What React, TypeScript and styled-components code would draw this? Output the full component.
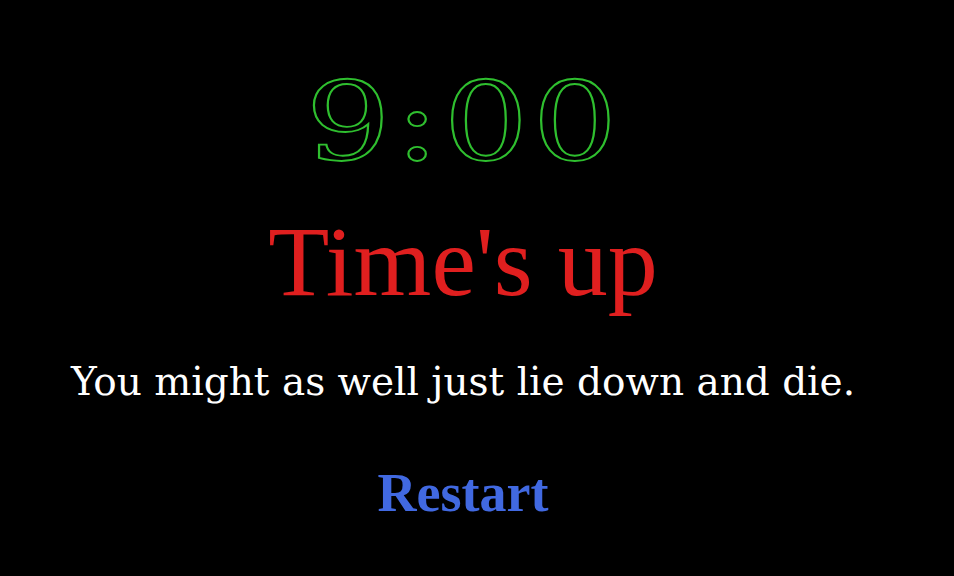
import styled, { createGlobalStyle } from 'styled-components';

const GlobalStyle = createGlobalStyle`
  html, body {
    margin: 0;
    padding: 0;
    background: #000;
  }
  body {
    width: 954px;
    height: 576px;
    overflow: hidden;
  }
`;

const Screen = styled.div`
  width: 954px;
  height: 576px;
  background: #000;
  display: flex;
  flex-direction: column;
  align-items: center;
  padding-right: 28px;
  box-sizing: border-box;
`;

const Clock = styled.div`
  margin-top: 68px;
  font-family: "DejaVu Serif", "Liberation Serif", serif;
  font-size: 108px;
  line-height: 108px;
  letter-spacing: 3px;
  color: transparent;
  -webkit-text-stroke: 1.8px #2fbf2f;
  transform: scaleX(1.24);
`;

const Title = styled.h1`
  margin: 36px 0 0;
  font-family: "Liberation Serif", "Times New Roman", serif;
  font-weight: normal;
  font-size: 100px;
  line-height: 100px;
  color: #e01f1f;
`;

const Message = styled.p`
  margin: 47px 0 0;
  font-family: "DejaVu Serif", "Liberation Serif", serif;
  font-size: 39px;
  line-height: 46px;
  color: #fff;
`;

const RestartButton = styled.button`
  margin-top: 61px;
  padding: 0;
  border: none;
  background: none;
  cursor: pointer;
  font-family: "Liberation Serif", "Times New Roman", serif;
  font-weight: bold;
  font-size: 54px;
  line-height: 54px;
  color: #4169e1;
`;

export default function App() {
  return (
    <>
      <GlobalStyle />
      <Screen>
        <Clock>9:00</Clock>
        <Title>Time's up</Title>
        <Message>You might as well just lie down and die.</Message>
        <RestartButton>Restart</RestartButton>
      </Screen>
    </>
  );
}
